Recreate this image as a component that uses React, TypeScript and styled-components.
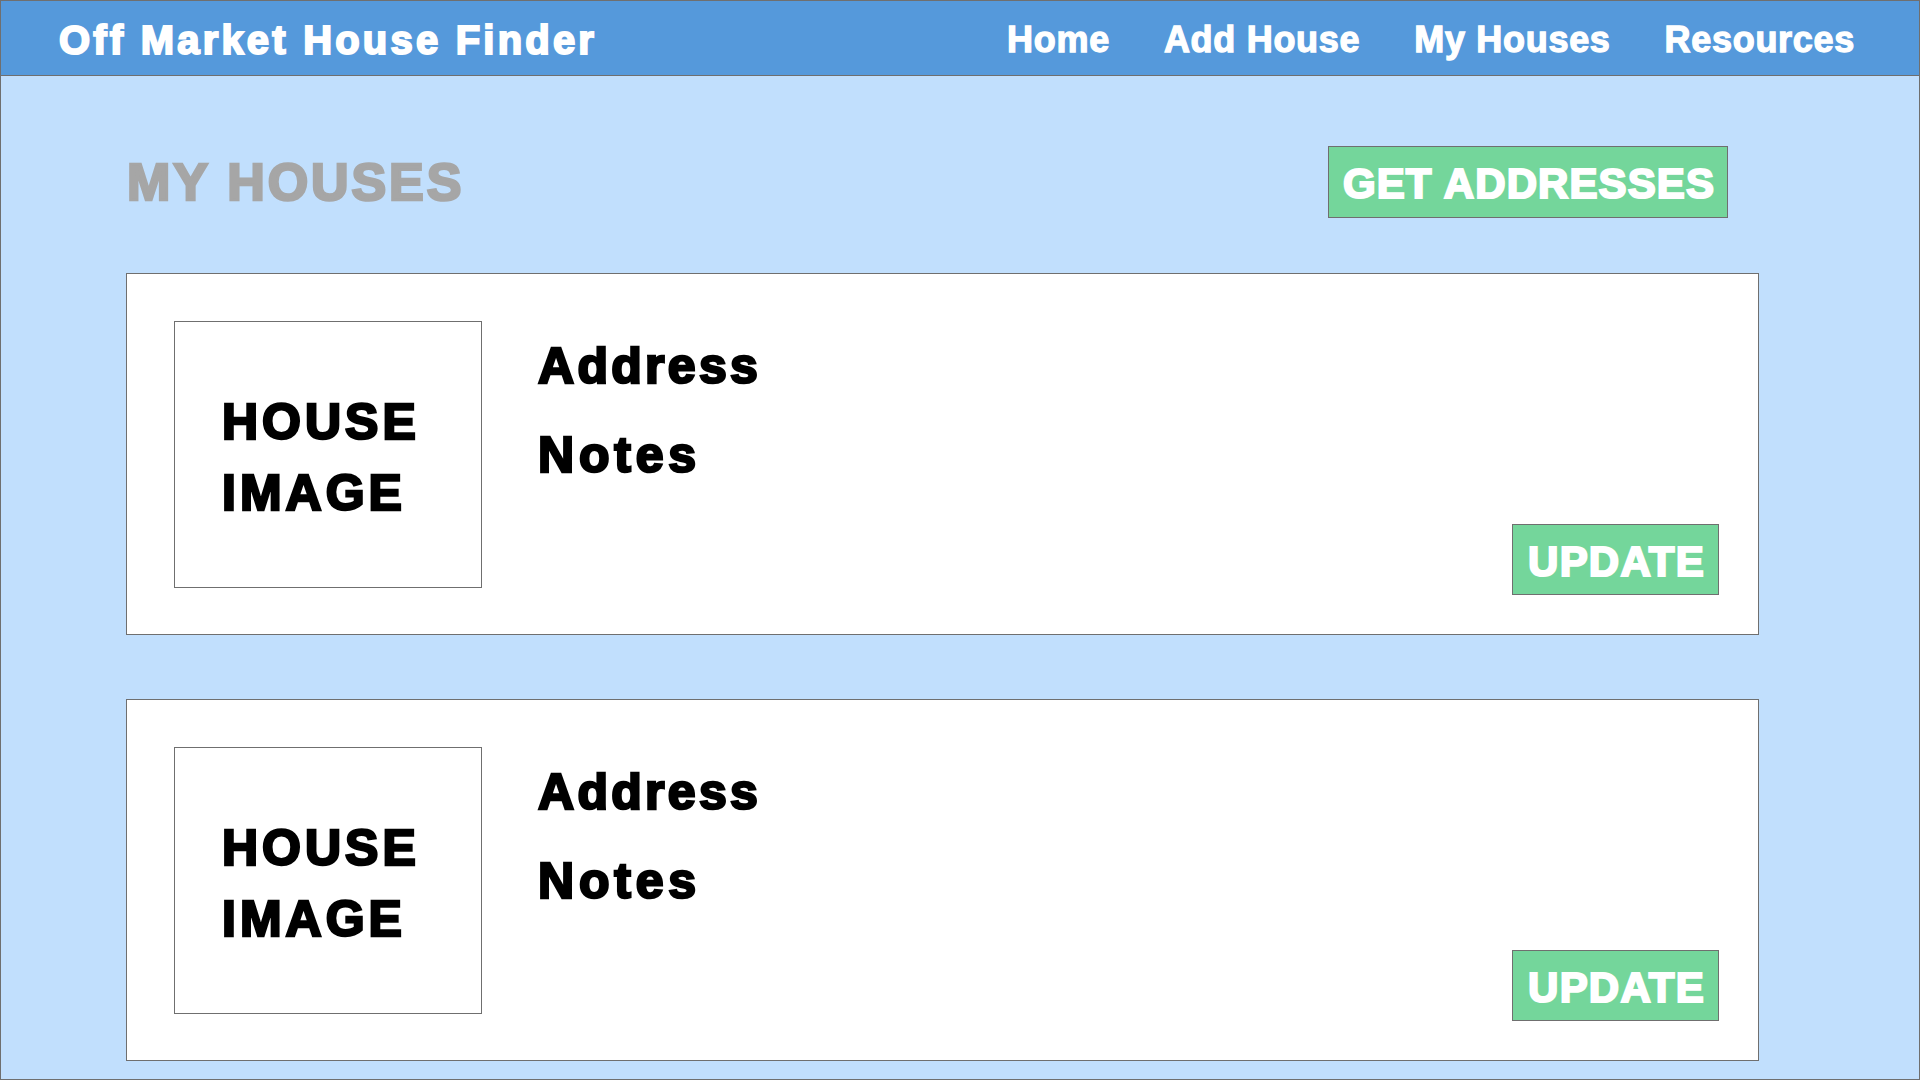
import React from "react";
import styled, { createGlobalStyle, css } from "styled-components";

const GlobalStyle = createGlobalStyle`
  html, body {
    margin: 0;
    padding: 0;
  }
  body {
    font-family: "Liberation Sans", Arial, Helvetica, sans-serif;
    font-weight: 700;
  }
  * { box-sizing: border-box; }
`;

const heavy = css`
  -webkit-text-stroke: 0.05em currentColor;
`;

const Page = styled.div`
  width: 1920px;
  height: 1080px;
  border: 1px solid #6f6f6f;
  background: #c1dffd;
  display: flex;
  flex-direction: column;
  overflow: hidden;
`;

const TopBar = styled.header`
  height: 75px;
  flex: none;
  background: #5599db;
  border-bottom: 1px solid #6f6f6f;
  display: flex;
  align-items: center;
  justify-content: space-between;
  padding: 4px 64px 0 58px;
`;

const Brand = styled.div`
  ${heavy};
  color: #ffffff;
  font-size: 40px;
  letter-spacing: 3.2px;
  white-space: nowrap;
`;

const Nav = styled.nav`
  display: flex;
  align-items: center;
  gap: 54px;
`;

const NavLink = styled.a`
  color: #ffffff;
  font-size: 36px;
  letter-spacing: 0.7px;
  -webkit-text-stroke: 0.035em currentColor;
  text-decoration: none;
  white-space: nowrap;
  cursor: pointer;
`;

const Main = styled.main`
  display: flex;
  flex-direction: column;
  padding: 70px 160px 0 125px;
`;

const HeadingRow = styled.div`
  display: flex;
  align-items: center;
  justify-content: space-between;
  height: 72px;
  padding-right: 31px;
  margin-bottom: 55px;
`;

const Heading = styled.h1`
  ${heavy};
  margin: 0 0 0 1px;
  color: #a6a6a6;
  font-size: 52px;
  letter-spacing: 2.9px;
  font-weight: 700;
`;

const GreenButton = styled.button<{ $w: number; $h: number; $size: number; $ls: number }>`
  ${heavy};
  width: ${(p) => p.$w}px;
  height: ${(p) => p.$h}px;
  background: #74d69b;
  border: 1px solid #6f6f6f;
  color: #ffffff;
  font-family: "Liberation Sans", Arial, Helvetica, sans-serif;
  font-weight: 700;
  font-size: ${(p) => p.$size}px;
  letter-spacing: ${(p) => p.$ls}px;
  padding: 4px 0 0 2px;
  display: flex;
  align-items: center;
  justify-content: center;
  cursor: pointer;
  flex: none;
`;

const CardList = styled.div`
  display: flex;
  flex-direction: column;
  gap: 64px;
`;

const Card = styled.section`
  height: 362px;
  background: #ffffff;
  border: 1px solid #6f6f6f;
  display: flex;
  padding: 47px 39px 39px 47px;
`;

const ImageBox = styled.div`
  ${heavy};
  width: 308px;
  height: 267px;
  flex: none;
  border: 1px solid #6f6f6f;
  display: flex;
  align-items: center;
  padding: 6px 0 0 47px;
  color: #000000;
  font-size: 50px;
  line-height: 71px;
  letter-spacing: 4px;
`;

const Info = styled.div`
  display: flex;
  flex-direction: column;
  margin-left: 56px;
  padding-top: 1px;
`;

const InfoLine = styled.div<{ $ls: number }>`
  ${heavy};
  color: #000000;
  font-size: 50px;
  line-height: 89px;
  letter-spacing: ${(p) => p.$ls}px;
`;

const CardAction = styled.div`
  margin-left: auto;
  align-self: flex-end;
`;

const houses = [{ id: 1 }, { id: 2 }];

export default function App() {
  return (
    <>
      <GlobalStyle />
      <Page>
        <TopBar>
          <Brand>Off Market House Finder</Brand>
          <Nav>
            <NavLink>Home</NavLink>
            <NavLink>Add House</NavLink>
            <NavLink>My Houses</NavLink>
            <NavLink>Resources</NavLink>
          </Nav>
        </TopBar>
        <Main>
          <HeadingRow>
            <Heading>MY HOUSES</Heading>
            <GreenButton $w={400} $h={72} $size={42} $ls={1.1}>
              GET ADDRESSES
            </GreenButton>
          </HeadingRow>
          <CardList>
            {houses.map((h) => (
              <Card key={h.id}>
                <ImageBox>
                  <div>
                    HOUSE
                    <br />
                    IMAGE
                  </div>
                </ImageBox>
                <Info>
                  <InfoLine $ls={3.3}>Address</InfoLine>
                  <InfoLine $ls={4.8}>Notes</InfoLine>
                </Info>
                <CardAction>
                  <GreenButton $w={207} $h={71} $size={42} $ls={1.2}>
                    UPDATE
                  </GreenButton>
                </CardAction>
              </Card>
            ))}
          </CardList>
        </Main>
      </Page>
    </>
  );
}
